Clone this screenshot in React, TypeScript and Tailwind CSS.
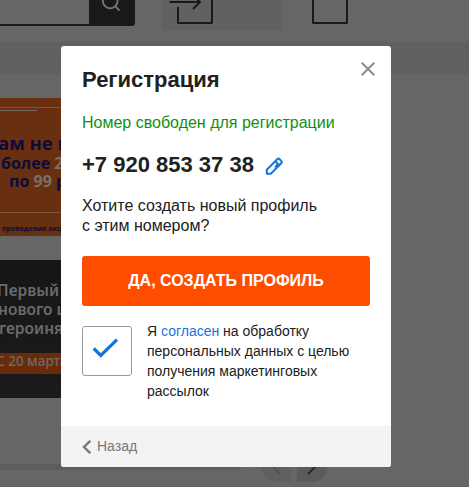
import React from "react";

function Header() {
  return (
    <header className="flex h-[42px] shrink-0 items-start">
      <div className="flex h-[26px] w-[135px] shrink-0 overflow-hidden rounded-br-[3px] border-b-2 border-[#19191a]">
        <div className="w-[89px]" />
        <div className="h-[26px] w-[46px] shrink-0 bg-[#19191a]">
          <svg width="46" height="26" viewBox="0 0 46 26" fill="none" stroke="#77777b" strokeWidth="1.8">
            <circle cx="21.2" cy="1" r="7.4" />
            <path d="M26.4 6.3 30.5 10.7" />
          </svg>
        </div>
      </div>
      <div className="ml-[26px] h-[30px] w-[121px] shrink-0 rounded-b bg-[#616161]">
        <svg width="60" height="30" viewBox="0 0 60 30" fill="none" stroke="#19191a" strokeWidth="2">
          <path d="M8.5 2H39M32-5 39 2 32 9M17 7V23H51V-4" strokeLinejoin="round" />
        </svg>
      </div>
      <div className="ml-[30px] h-6 w-9 shrink-0 rounded-b-[2px] border-x-2 border-b-2 border-[#19191a]" />
    </header>
  );
}

function PromoBanner() {
  return (
    <div className="h-[138px] w-[220px] shrink-0 overflow-hidden bg-[#682f10] font-['Open_Sans','Noto_Sans',sans-serif] font-bold whitespace-nowrap text-[#0c0c3a]">
      <div className="mt-[9px] h-px bg-[#7a5745]" />
      <div className="mt-[2px] h-px w-[37px] bg-[#73655f]" />
      <div className="mt-[19px] -ml-[2px] text-[18.5px] leading-[26px]">ам не м</div>
      <div className="mt-[-2px] ml-[1px] text-[16px] leading-[18px]">
        более <span className="text-[#77706c]">2</span>
      </div>
      <div className="ml-[9px] text-[16px] leading-[18px]">
        по <span className="text-[#77706c]">99</span> р
      </div>
      <div className="mt-[22px] h-px bg-[#7a5745]" />
      <div className="mt-[11px] ml-[2px] text-[7px] leading-[10px]">проведения акции</div>
    </div>
  );
}

function NewsBanner() {
  return (
    <div className="mt-6 h-[138px] w-[220px] shrink-0 overflow-hidden bg-[#19191a] bg-linear-to-b from-[#161617] to-[#1b1b1d] pt-[21px] font-['Noto_Sans',sans-serif] font-semibold whitespace-nowrap text-[#6b6b6b]">
      <div className="-ml-[3px] text-[15.5px] leading-[19px]">Первый</div>
      <div className="-ml-[2px] text-[15.5px] leading-[19px]">нового ц</div>
      <div className="-ml-[1px] text-[15.5px] leading-[19px]">героиня</div>
      <div className="mt-[15px] h-[21px] bg-[#6a2b09] text-[13.5px] leading-[17px] font-medium">
        <span className="-ml-[4px]">С 20 марта</span>
      </div>
    </div>
  );
}

function Page() {
  return (
    <div className="flex h-[487px] flex-col overflow-hidden border-b border-[#615f60] bg-[#666666]">
      <Header />
      <div className="mb-6 h-8 shrink-0 bg-[#606060]" />
      <PromoBanner />
      <NewsBanner />
      <div className="mt-[54px] flex shrink-0 items-start">
        <div className="mt-3 h-[6px] w-[241px] rounded-r-sm bg-[#5d5d5d]" />
        <div className="ml-5 h-[30px] w-[30px] rounded-l-full bg-[#606060]">
          <svg width="30" height="30" viewBox="0 0 30 30" fill="none" stroke="#525252" strokeWidth="2">
            <path d="m19 22-8-8 8-8" />
          </svg>
        </div>
        <div className="ml-[6px] h-[30px] w-[30px] rounded-r-full bg-[#5b5b5b]">
          <svg width="30" height="30" viewBox="0 0 30 30" fill="none" stroke="#292929" strokeWidth="2">
            <path d="m11 22 8-8-8-8" />
          </svg>
        </div>
      </div>
    </div>
  );
}

function RegistrationDialog() {
  return (
    <section
      role="dialog"
      className="absolute top-[46px] left-[61px] flex h-[421px] w-[330px] flex-col overflow-hidden rounded-[3px] bg-white font-['Liberation_Sans',Arial,sans-serif] text-[#212121]"
    >
      <div className="flex-1 px-[21px]">
        <div className="flex h-[67px] justify-between">
          <h2 className="pt-[21px] text-[22px] leading-[26px] font-bold">Регистрация</h2>
          <button aria-label="Закрыть" className="-mr-[5px] h-fit pt-4">
            <svg width="14" height="14" viewBox="0 0 14 14" className="block" fill="none" stroke="#8b8b8b" strokeWidth="2">
              <path d="m.7.7 12.6 12.6M13.3.7.7 13.3" />
            </svg>
          </button>
        </div>
        <p className="text-[16px] leading-5 whitespace-nowrap text-[#109010]">Номер свободен для регистрации</p>
        <div className="mt-5 flex h-6 items-center">
          <span className="text-[22px] leading-6 font-bold whitespace-nowrap">+7 920 853 37 38</span>
          <svg width="18" height="18" viewBox="0 0 18 18" className="mt-px ml-[11px]" fill="none" stroke="#1474e4" strokeWidth="2" strokeLinejoin="round">
            <path d="M1.8 16.8V12.8L12.2 2.2Q13.4 1 14.6 2.2L16.3 3.9Q17.4 5 16.2 6.2L5.8 16.8ZM11 5 14 8M13.2 7 10 10.2" />
          </svg>
        </div>
        <p className="mt-[19px] text-[16px] leading-5">
          Хотите создать новый профиль
          <br />с этим номером?
        </p>
        <button className="mt-5 block h-[50px] w-[288px] rounded-[3px] bg-[#ff4d00] text-[16px] leading-5 font-bold text-white">
          ДА, СОЗДАТЬ ПРОФИЛЬ
        </button>
        <div className="mt-[15px] flex items-start">
          <div className="mt-[5px] h-[50px] w-[50px] shrink-0 rounded-[3px] border border-[#999999] bg-white">
            <svg width="48" height="48" viewBox="0 0 48 48" fill="none" stroke="#1474e4" strokeWidth="3.2">
              <path d="m10.8 21.5 7 7L34 12.7" />
            </svg>
          </div>
          <p className="ml-[15px] text-[14px] leading-5 whitespace-nowrap">
            Я <a className="text-[#1474e4]">согласен</a> на обработку
            <br />
            персональных данных с целью
            <br />
            получения маркетинговых
            <br />
            рассылок
          </p>
        </div>
      </div>
      <footer className="flex h-[41px] shrink-0 items-center bg-[#f3f3f3] pl-[21px] text-[14px] text-[#77787a]">
        <svg width="10" height="14" viewBox="0 0 10 14" fill="none" stroke="#77787a" strokeWidth="2.4">
          <path d="M8.3.8 2 7l6.3 6.2" />
        </svg>
        <span className="ml-[5px]">Назад</span>
      </footer>
    </section>
  );
}

export default function App() {
  return (
    <main className="relative h-[487px] w-[469px] overflow-hidden">
      <Page />
      <RegistrationDialog />
    </main>
  );
}
